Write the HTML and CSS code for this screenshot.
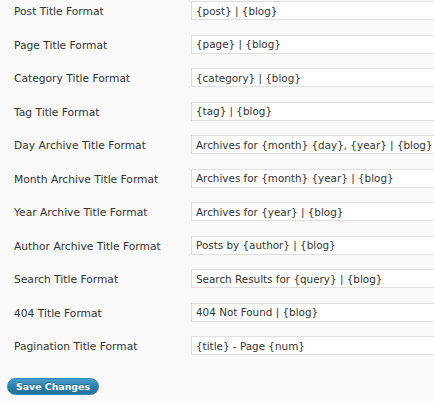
FILE: index.html
```html
<!DOCTYPE html>
<html lang="en">
<head>
    <meta charset="UTF-8">
    <title>Title Formats</title>
    <link rel="stylesheet" href="styles.css">
</head>
<body>
    <form class="options-form">
        <table class="form-table">
            <tr><th>Post Title Format</th><td><input type="text" class="regular-text" value="{post} | {blog}"></td></tr>
            <tr><th>Page Title Format</th><td><input type="text" class="regular-text" value="{page} | {blog}"></td></tr>
            <tr><th>Category Title Format</th><td><input type="text" class="regular-text" value="{category} | {blog}"></td></tr>
            <tr><th>Tag Title Format</th><td><input type="text" class="regular-text" value="{tag} | {blog}"></td></tr>
            <tr><th>Day Archive Title Format</th><td><input type="text" class="regular-text" value="Archives for {month} {day}, {year} | {blog}"></td></tr>
            <tr><th>Month Archive Title Format</th><td><input type="text" class="regular-text" value="Archives for {month} {year} | {blog}"></td></tr>
            <tr><th>Year Archive Title Format</th><td><input type="text" class="regular-text" value="Archives for {year} | {blog}"></td></tr>
            <tr><th>Author Archive Title Format</th><td><input type="text" class="regular-text" value="Posts by {author} | {blog}"></td></tr>
            <tr><th>Search Title Format</th><td><input type="text" class="regular-text" value="Search Results for {query} | {blog}"></td></tr>
            <tr><th>404 Title Format</th><td><input type="text" class="regular-text" value="404 Not Found | {blog}"></td></tr>
            <tr><th>Pagination Title Format</th><td><input type="text" class="regular-text" value="{title} - Page {num}"></td></tr>
        </table>
        <p class="submit">
            <button type="submit" class="button-primary">Save Changes</button>
        </p>
    </form>
</body>
</html>
```

FILE: styles.css
```css
* {
    box-sizing: border-box;
    margin: 0;
    padding: 0;
}
body {
    background: #f9f9f9;
    font-family: "DejaVu Sans", Verdana, sans-serif;
    font-size: 10.7px;
    color: #333;
    overflow: hidden;
}
.options-form {
    width: 434px;
    padding-top: 1px;
    overflow: hidden;
}
/* table of title formats */
.form-table {
    border-collapse: collapse;
    width: 100%;
    table-layout: fixed;
}
.form-table tr {
    height: 33.5px;
}
.form-table th {
    width: 191px;
    padding: 3px 0 0 14px;
    text-align: left;
    font-weight: normal;
    vertical-align: top;
    line-height: 16px;
    white-space: nowrap;
}
.form-table td {
    vertical-align: top;
    overflow: hidden;
}
.regular-text {
    display: block;
    width: 330px;
    height: 19px;
    padding: 0 4px;
    border: 1px solid #dfdfdf;
    background: #fff;
    font-family: inherit;
    font-size: 10.4px;
    color: #333;
    outline: none;
}
/* save button */
.submit {
    height: 31px;
    padding: 8px 0 0 7px;
}
.button-primary {
    display: block;
    width: 92px;
    height: 17px;
    border: 1px solid #2a85b3;
    border-radius: 11px;
    background: linear-gradient(#4a9ccb, #2a7eac 55%, #21719a);
    color: #fff;
    font-family: inherit;
    font-size: 9.4px;
    font-weight: bold;
    line-height: 15px;
    text-align: center;
    text-shadow: 0 -1px 0 rgba(0,0,0,0.3);
    cursor: pointer;
}
```
